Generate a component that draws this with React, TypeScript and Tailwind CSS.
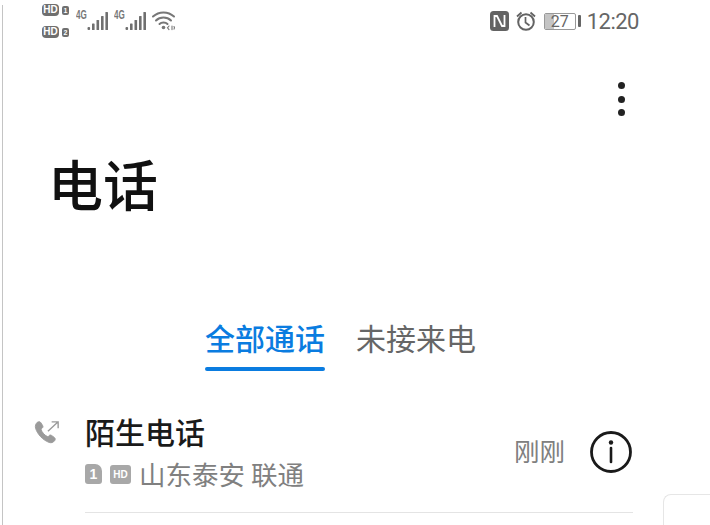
const cjk = "font-['Noto_Sans_CJK_SC','Noto_Sans',sans-serif]";

function SimBadge({ label, sim }: { label: string; sim: string }) {
  return (
    <div className="flex items-center gap-[3px] h-[12px]">
      <span className="w-[17px] h-[12px] rounded-[4px] bg-[#6f6f6f] text-white text-[10px] font-bold leading-[12px] text-center font-['Liberation_Sans',sans-serif]">
        {label}
      </span>
      <span className="w-[7px] h-[9px] mt-[1px] rounded-[2px] bg-[#6f6f6f] text-white text-[7px] font-bold leading-[9px] text-center font-['Liberation_Sans',sans-serif]">
        {sim}
      </span>
    </div>
  );
}

function Signal() {
  return (
    <div className="flex items-start w-[38px]">
      <span className="w-[10px] mt-[8px] text-[13px] font-bold leading-[14px] text-[#777] whitespace-nowrap scale-x-[0.62] origin-left font-['Liberation_Sans',sans-serif]">
        4G
      </span>
      <svg width="21" height="20" viewBox="0 0 21 20" className="mt-[11px] ml-[1px]" fill="#6f6f6f">
        <rect x="0.500" y="16" width="2.600" height="3" rx="1" />
        <rect x="5" y="12.500" width="2.600" height="6.500" rx="0.600" />
        <rect x="9.500" y="9" width="2.600" height="10" rx="0.600" />
        <rect x="14" y="5" width="2.600" height="14" rx="0.600" />
        <rect x="18.400" y="1" width="2.600" height="18" rx="0.600" />
      </svg>
    </div>
  );
}

function Wifi() {
  return (
    <svg width="23" height="20" viewBox="0 0 23 20" fill="none" stroke="#777" strokeWidth="2" strokeLinecap="round">
      <path d="M1 5.500C7 0 16 0 22 5.500" />
      <path d="M4 9.500C8 5.500 15 5.500 19 9.500" />
      <path d="M7.500 13C9.500 11 13.500 11 15.500 13" />
      <circle cx="11.500" cy="16.500" r="1.800" fill="#777" stroke="none" />
      <path d="M17 15l-1.500 1.800 1.500 1.800M20 15v3.600M22 15.500l.5 1.300-.5 1.300" strokeWidth="1.100" />
    </svg>
  );
}

function Nfc() {
  return (
    <svg width="19" height="20" viewBox="0 0 19 20">
      <rect x="0" y="0" width="19" height="20" rx="3.500" fill="#636363" />
      <path d="M4.500 16V5h2.500l5 10h2.500V4" fill="none" stroke="#fff" strokeWidth="1.800" />
    </svg>
  );
}

function Alarm() {
  return (
    <svg width="20" height="20" viewBox="0 0 20 20" fill="none" stroke="#636363" strokeWidth="2">
      <circle cx="10" cy="11" r="7.800" />
      <path d="M9.500 6v5.500l4 3" strokeWidth="1.700" />
      <path d="M1 5.500l4.500-4M19 5.500l-4.500-4" strokeWidth="1.800" />
    </svg>
  );
}

function Battery() {
  return (
    <div className="flex items-center gap-[2px]">
      <div className="relative w-[32px] h-[17px] rounded-[2px] border border-[#999] overflow-hidden text-center text-[16px] leading-[15px] text-[#666] font-['Roboto',sans-serif]">
        <div className="absolute left-0 top-0 bottom-0 w-[9px] bg-[#c4c4c4]" />
        <span className="relative">27</span>
      </div>
      <div className="w-[3px] h-[12px] rounded-[1px] bg-[#666]" />
    </div>
  );
}

function CallIcon() {
  return (
    <svg width="26" height="26" viewBox="0 0 28 28" fill="none">
      <path
        d="M3.500 2.500c1.500-1 3-1 3.800.3l2 3.200c.6 1 .4 2-.5 2.800l-1.300 1c1 3.500 4 6.800 7.400 8.300l1.200-1.200c.8-.8 1.900-1 2.800-.3l3 2.200c1.200.9 1.200 2.300.3 3.500-1.300 1.800-3.500 2.700-5.800 1.900C9.500 21.700 3.800 15.500 1.700 9c-.7-2.500.2-5 1.800-6.500z"
        fill="#9a9a9a"
        stroke="#9a9a9a"
        strokeWidth="1"
      />
      <path d="M15 12L26 2M19 2H26V9" stroke="#9a9a9a" strokeWidth="1.500" />
    </svg>
  );
}

function InfoIcon() {
  return (
    <svg width="44" height="44" viewBox="0 0 44 44" fill="none" stroke="#1a1a1a">
      <circle cx="22" cy="22" r="19.500" strokeWidth="2.800" />
      <circle cx="22" cy="12.500" r="2.200" fill="#1a1a1a" stroke="none" />
      <path d="M22 18v14" strokeWidth="2.600" strokeLinecap="round" />
    </svg>
  );
}

export default function App() {
  return (
    <div className={`relative w-[710px] h-[525px] overflow-hidden bg-white ${cjk}`}>
      {/* screen edge and the corner of the next card, both show through the shot */}
      <div className="absolute left-[2px] top-[5px] bottom-0 w-[1px] bg-[#c4c4c4]" />
      <div className="absolute left-[663px] top-[494px] w-[60px] h-[60px] rounded-tl-[8px] border-l border-t border-[#e6e6e6]" />

      <div className="flex justify-between h-[48px] pl-[42px] pr-[71px]">
        <div className="flex">
          <div className="flex flex-col gap-[10px] pt-[4px] w-[34px]">
            <SimBadge label="HD" sim="1" />
            <SimBadge label="HD" sim="2" />
          </div>
          <Signal />
          <Signal />
          <div className="pt-[11px]">
            <Wifi />
          </div>
        </div>
        <div className="flex items-center h-[42px]">
          <Nfc />
          <div className="w-[7px]" />
          <Alarm />
          <div className="w-[8px]" />
          <Battery />
          <span className="ml-[6px] text-[22px] tracking-[-0.500px] text-[#666] font-['Roboto',sans-serif]">12:20</span>
        </div>
      </div>

      <div className="flex justify-end pr-[85px] pt-[34px] h-[71px]">
        <div className="flex flex-col gap-[6.500px]">
          <span className="size-[7px] rounded-full bg-[#222]" />
          <span className="size-[7px] rounded-full bg-[#222]" />
          <span className="size-[7px] rounded-full bg-[#222]" />
        </div>
      </div>

      <h1 className="pl-[48px] mt-[18px] text-[55px] leading-[90px] font-medium text-[#111]">电话</h1>

      <div className="flex gap-[31px] pl-[205px] mt-[90px]">
        <div className="flex flex-col">
          <span className="text-[30px] leading-[40px] font-medium text-[#0a7ce0]">全部通话</span>
          <span className="mt-[10px] h-[4px] rounded-full bg-[#0a7ce0]" />
        </div>
        <span className="text-[30px] leading-[40px] text-[#666]">未接来电</span>
      </div>

      <div className="flex pl-[34px] mt-[43px]">
        <div className="w-[51px] pt-[6px]">
          <CallIcon />
        </div>
        <div className="w-[548px] flex justify-between border-b border-[#e4e4e4] h-[99px]">
          <div className="flex flex-col">
            <span className="text-[30px] leading-[36px] -mt-[1px] font-medium text-[#1a1a1a]">陌生电话</span>
            <div className="flex items-center mt-[9px]">
              <span className="w-[17px] h-[20px] rounded-[3px] rounded-tr-[7px] bg-[#a8a8a8] text-white text-[14px] font-bold leading-[20px] text-center font-['Liberation_Sans',sans-serif]">
                1
              </span>
              <span className="ml-[8px] w-[21px] h-[19px] rounded-[3px] bg-[#a8a8a8] text-white text-[10px] font-bold leading-[19px] text-center font-['Liberation_Sans',sans-serif]">
                HD
              </span>
              <span className="ml-[8px] text-[26.500px] leading-[32px] text-[#808080]">山东泰安 联通</span>
            </div>
          </div>
          <div className="flex items-start pt-[16px]">
            <span className="text-[25.500px] leading-[40px] text-[#808080]">刚刚</span>
            <div className="ml-[24px]">
              <InfoIcon />
            </div>
          </div>
        </div>
      </div>
    </div>
  );
}
